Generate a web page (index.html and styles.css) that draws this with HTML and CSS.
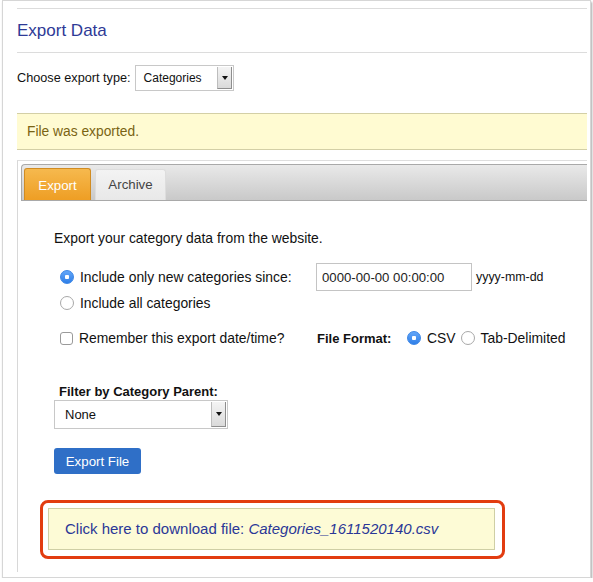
FILE: index.html
```html
<!DOCTYPE html>
<html lang="en">
<head>
    <meta charset="UTF-8">
    <meta name="viewport" content="width=device-width, initial-scale=1.0">
    <title>Export Data</title>
    <link rel="stylesheet" href="styles.css">
</head>
<body>
    <div class="window">
        <div class="page">
            <h1 class="page-title">Export Data</h1>

            <div class="type-row">
                <label>Choose export type:</label>
                <div class="select select-type">
                    <span class="select-value">Categories</span>
                    <span class="select-arrow"></span>
                </div>
            </div>

            <div class="notice">File was exported.</div>

            <div class="tabs">
                <div class="tab-bar">
                    <div class="tab active">Export</div>
                    <div class="tab">Archive</div>
                </div>

                <div class="tab-panel">
                    <p class="intro">Export your category data from the website.</p>

                    <div class="option-row first">
                        <label class="option-label"><input type="radio" name="range" checked> Include only new categories since:</label>
                        <input type="text" class="date-input" value="0000-00-00 00:00:00">
                        <span class="hint">yyyy-mm-dd</span>
                    </div>
                    <div class="option-row">
                        <label class="option-label"><input type="radio" name="range"> Include all categories</label>
                    </div>

                    <div class="option-row format-row">
                        <label class="option-label"><input type="checkbox"> Remember this export date/time?</label>
                        <span class="format-title">File Format:</span>
                        <label class="format-choice"><input type="radio" name="format" checked> CSV</label>
                        <label class="format-choice"><input type="radio" name="format"> Tab-Delimited</label>
                    </div>

                    <div class="filter">
                        <div class="filter-title">Filter by Category Parent:</div>
                        <div class="select select-parent">
                            <span class="select-value">None</span>
                            <span class="select-arrow"></span>
                        </div>
                    </div>

                    <button class="btn-export">Export File</button>

                    <div class="download-highlight">
                        <div class="download">
                            <a href="#">Click here to download file: <em>Categories_1611520140.csv</em></a>
                        </div>
                    </div>
                </div>
            </div>
        </div>
    </div>
</body>
</html>
```

FILE: styles.css
```css
* {
    box-sizing: border-box;
}

body {
    margin: 0;
    background: #ffffff;
    font-family: 'Liberation Sans', Arial, sans-serif;
    color: #111;
}

.window {
    margin-left: 2px;
    width: 589px;
    height: 578px;
    border: 1px solid #d6d6d6;
    box-shadow: 1px 2px 2px rgba(0,0,0,0.35);
    padding: 7px 3px 0 14px;
    overflow: hidden;
}

.page {
    border-top: 1px solid #dcdcdc;
}

.page-title {
    margin: 0;
    padding: 11px 0 10px;
    font-size: 17px;
    line-height: 22px;
    font-weight: normal;
    color: #2e3a96;
    border-bottom: 1px solid #dcdcdc;
}

.type-row {
    display: flex;
    align-items: center;
    margin-top: 12px;
    font-size: 12.7px;
}

.type-row label {
    margin-right: 4px;
}

/* fake select boxes */
.select {
    display: flex;
    align-items: stretch;
    border: 1px solid #c8c8c8;
    background: #fff;
}

.select-value {
    flex: 1;
    display: flex;
    align-items: center;
}

.select-arrow {
    position: relative;
    width: 15px;
    margin: 1px;
    background: linear-gradient(#f4f4f4, #dadada);
    border-left: 1px solid #bdbdbd;
    border-right: 1px solid #8e8e8e;
    border-bottom: 1px solid #8e8e8e;
}

.select-arrow::after {
    content: "";
    position: absolute;
    left: 4px;
    top: 50%;
    margin-top: -2px;
    border-left: 3px solid transparent;
    border-right: 3px solid transparent;
    border-top: 4px solid #111;
}

.select-type {
    width: 99px;
    height: 26px;
    font-size: 12px;
}

.select-type .select-value {
    padding-left: 8px;
}

.notice {
    margin-top: 22px;
    padding: 0 10px;
    height: 37px;
    line-height: 35px;
    background: #fffbd2;
    border-top: 1px solid #d3cfa6;
    border-bottom: 1px solid #d3cfa6;
    color: #7a6414;
    font-size: 13.8px;
}

/* tabs */
.tabs {
    margin-top: 10px;
    height: 412px;
    border-top: 1px solid #dedede;
    border-left: 1px solid #d8d8d8;
    padding: 3px 0 0 3px;
}

.tab-bar {
    display: flex;
    align-items: flex-end;
    gap: 4px;
    height: 37px;
    padding-left: 2px;
    border: 1px solid #a9a9a9;
    border-right: none;
    border-radius: 4px 0 0 0;
    background: linear-gradient(#e9e9e9, #c9c9c9);
}

.tab {
    height: 31px;
    width: 71px;
    text-align: center;
    line-height: 30px;
    font-size: 13.3px;
    color: #444;
    background: linear-gradient(#f3f3f3, #e8e8e8);
    border: 1px solid #dddddd;
    border-bottom: none;
    border-radius: 3px 3px 0 0;
}

.tab.active {
    height: 32px;
    width: 67px;
    color: #fff;
    background: linear-gradient(#f6b94e, #ee9e24);
    border-color: #d18c22;
    line-height: 33px;
}

.tab-panel {
    padding: 29px 0 0 33px;
    font-size: 13.9px;
}

.intro {
    margin: 0;
    line-height: 16px;
}

.option-row {
    display: flex;
    align-items: center;
    height: 18px;
    margin-top: 3px;
}

.option-row.first {
    height: 28px;
    margin-top: 17px;
}

.option-label {
    display: flex;
    align-items: center;
    width: 262px;
    padding-left: 6px;
}

.option-label input {
    margin: 0 6px 0 0;
}

.date-input {
    width: 156px;
    height: 28px;
    border: 1px solid #c4c4c4;
    padding: 0 5px;
    font-family: inherit;
    font-size: 13.2px;
    color: #222;
}

.hint {
    margin-left: 4px;
    font-size: 12.4px;
}

.format-row {
    margin-top: 17px;
}

.format-title {
    font-weight: bold;
    font-size: 13px;
    width: 90px;
    margin-left: 1px;
}

.format-choice {
    display: flex;
    align-items: center;
    margin-right: 5px;
}

.format-choice input {
    margin: 0 6px 0 0;
}

/* radio + checkbox look */
input[type="radio"],
input[type="checkbox"] {
    appearance: none;
    -webkit-appearance: none;
    width: 14px;
    height: 14px;
    background: #fff;
    border: 1px solid #a8a8a8;
    border-radius: 50%;
}

input[type="radio"]:checked {
    border-color: #3b86e6;
    background: radial-gradient(circle, #fff 0 2px, transparent 2.5px), linear-gradient(#63a6f8, #2f7fe8);
}

input[type="checkbox"] {
    width: 13px;
    height: 13px;
    border-radius: 3px;
    border-color: #9a9a9a;
}

.filter {
    margin-top: 37px;
}

.filter-title {
    font-weight: bold;
    font-size: 13px;
    line-height: 16px;
    padding-left: 5px;
}

.select-parent {
    width: 174px;
    height: 29px;
    font-size: 13px;
}

.select-parent .select-value {
    padding-left: 10px;
}

.btn-export {
    display: block;
    margin-top: 19px;
    width: 87px;
    height: 26px;
    border: none;
    border-radius: 3px;
    background: #2f6fc7;
    color: #fff;
    font-family: inherit;
    font-size: 13.3px;
}

.download-highlight {
    margin: 26px 0 0 -14px;
    width: 465px;
    padding: 5px 7px 6px 5px;
    border: 3px solid #e23c10;
    border-radius: 8px;
}

.download {
    height: 42px;
    padding-left: 16px;
    line-height: 40px;
    background: #fdfbd6;
    border: 1px solid #cfcfa5;
    font-size: 15px;
}

.download a {
    color: #2a3797;
    text-decoration: none;
}
```
